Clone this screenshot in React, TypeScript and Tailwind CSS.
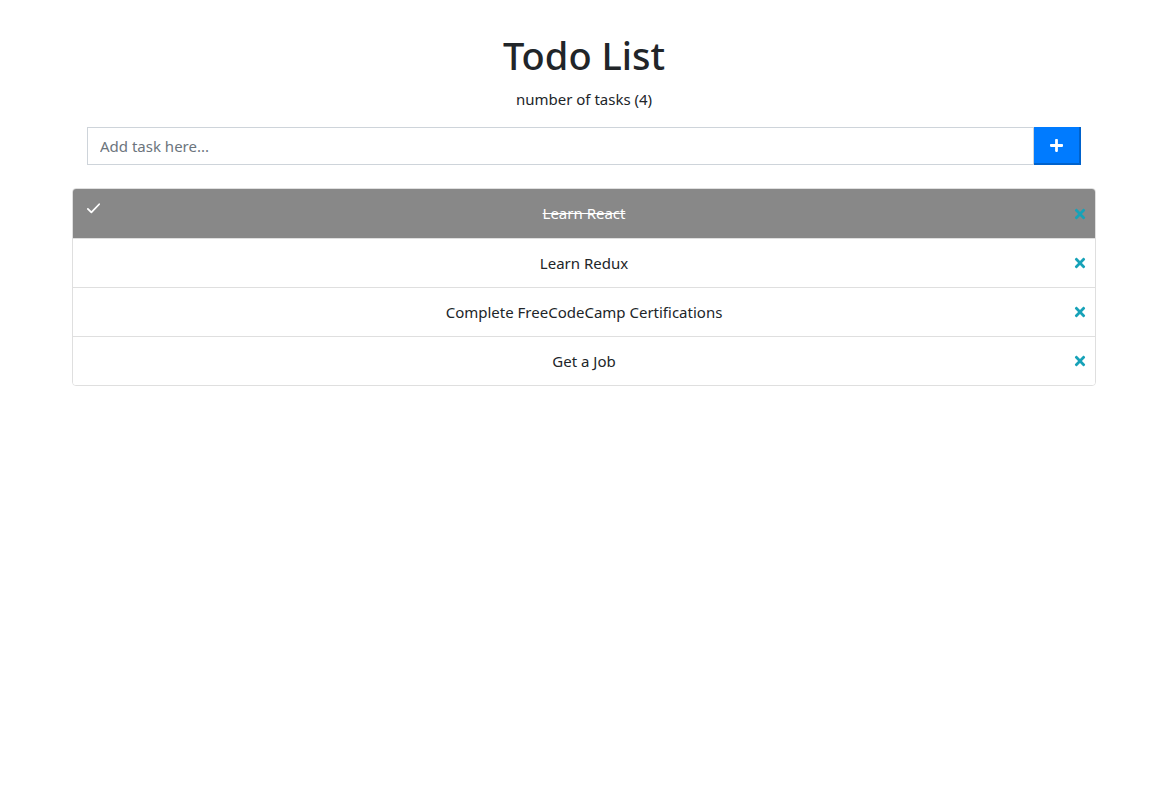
import { FC } from 'react';

const tasks = [
  { text: 'Learn React', done: true },
  { text: 'Learn Redux', done: false },
  { text: 'Complete FreeCodeCamp Certifications', done: false },
  { text: 'Get a Job', done: false },
];

const TimesIcon: FC = () => (
  <svg viewBox="0 0 352 512" className="w-[12px] h-[15px] fill-[#17a2b8]">
    <path d="M242.72 256l100.07-100.07c12.28-12.28 12.28-32.19 0-44.48l-22.24-22.24c-12.28-12.28-32.19-12.28-44.48 0L176 189.28 75.93 89.21c-12.28-12.28-32.19-12.28-44.48 0L9.21 111.45c-12.28 12.28-12.28 32.19 0 44.48L109.28 256 9.21 356.07c-12.28 12.28-12.28 32.19 0 44.48l22.24 22.24c12.28 12.28 32.2 12.28 44.48 0L176 322.72l100.07 100.07c12.28 12.28 32.2 12.28 44.48 0l22.24-22.24c12.28-12.28 12.28-32.19 0-44.48L242.72 256z" />
  </svg>
);

export default function App() {
  return (
    <div className="min-h-screen bg-white text-[#212529] font-['Noto_Sans',sans-serif]">
      <div className="ml-[72px] w-[1024px] pt-[32px]">
        <h1 className="text-center text-[38px] leading-[1.25] font-medium">Todo List</h1>
        <p className="text-center text-[15px] mt-[8px]">number of tasks (4)</p>

        <div className="mx-[15px] mt-[17px] flex h-[38px]">
          <input
            type="text"
            placeholder="Add task here..."
            className="flex-1 border border-[#ced4da] px-3 text-[15px] placeholder:text-[#6c757d] outline-none"
          />
          <button className="w-[47px] bg-[#007bff] border-r-2 border-b-2 border-[#0062cc] flex items-center justify-center">
            <svg viewBox="0 0 448 512" className="w-[13px] h-[15px] fill-white">
              <path d="M416 208H272V64c0-17.67-14.33-32-32-32h-32c-17.67 0-32 14.33-32 32v144H32c-17.67 0-32 14.33-32 32v32c0 17.67 14.33 32 32 32h144v144c0 17.67 14.33 32 32 32h32c17.67 0 32-14.33 32-32V304h144c17.67 0 32-14.33 32-32v-32c0-17.67-14.33-32-32-32z" />
            </svg>
          </button>
        </div>

        <ul className="mt-[23px] border border-[#dfdfdf] rounded-[4px] overflow-hidden">
          {tasks.map((t, i) => (
            <li
              key={t.text}
              className={`relative h-[49px] flex items-center justify-center text-[15px] ${
                i > 0 ? 'border-t border-[#dfdfdf]' : ''
              } ${t.done ? 'bg-[#888888] text-white line-through' : 'bg-white'}`}
            >
              {t.done && (
                <svg viewBox="0 0 24 24" className="absolute left-[12px] top-[11px] w-[17px] h-[17px] stroke-white fill-none" strokeWidth="2.5" strokeLinecap="round" strokeLinejoin="round">
                  <path d="M4 12.5l5 5L20 6" />
                </svg>
              )}
              <span>{t.text}</span>
              <span className="absolute right-[9px] top-1/2 -translate-y-1/2 flex">
                <TimesIcon />
              </span>
            </li>
          ))}
        </ul>
      </div>
    </div>
  );
}
